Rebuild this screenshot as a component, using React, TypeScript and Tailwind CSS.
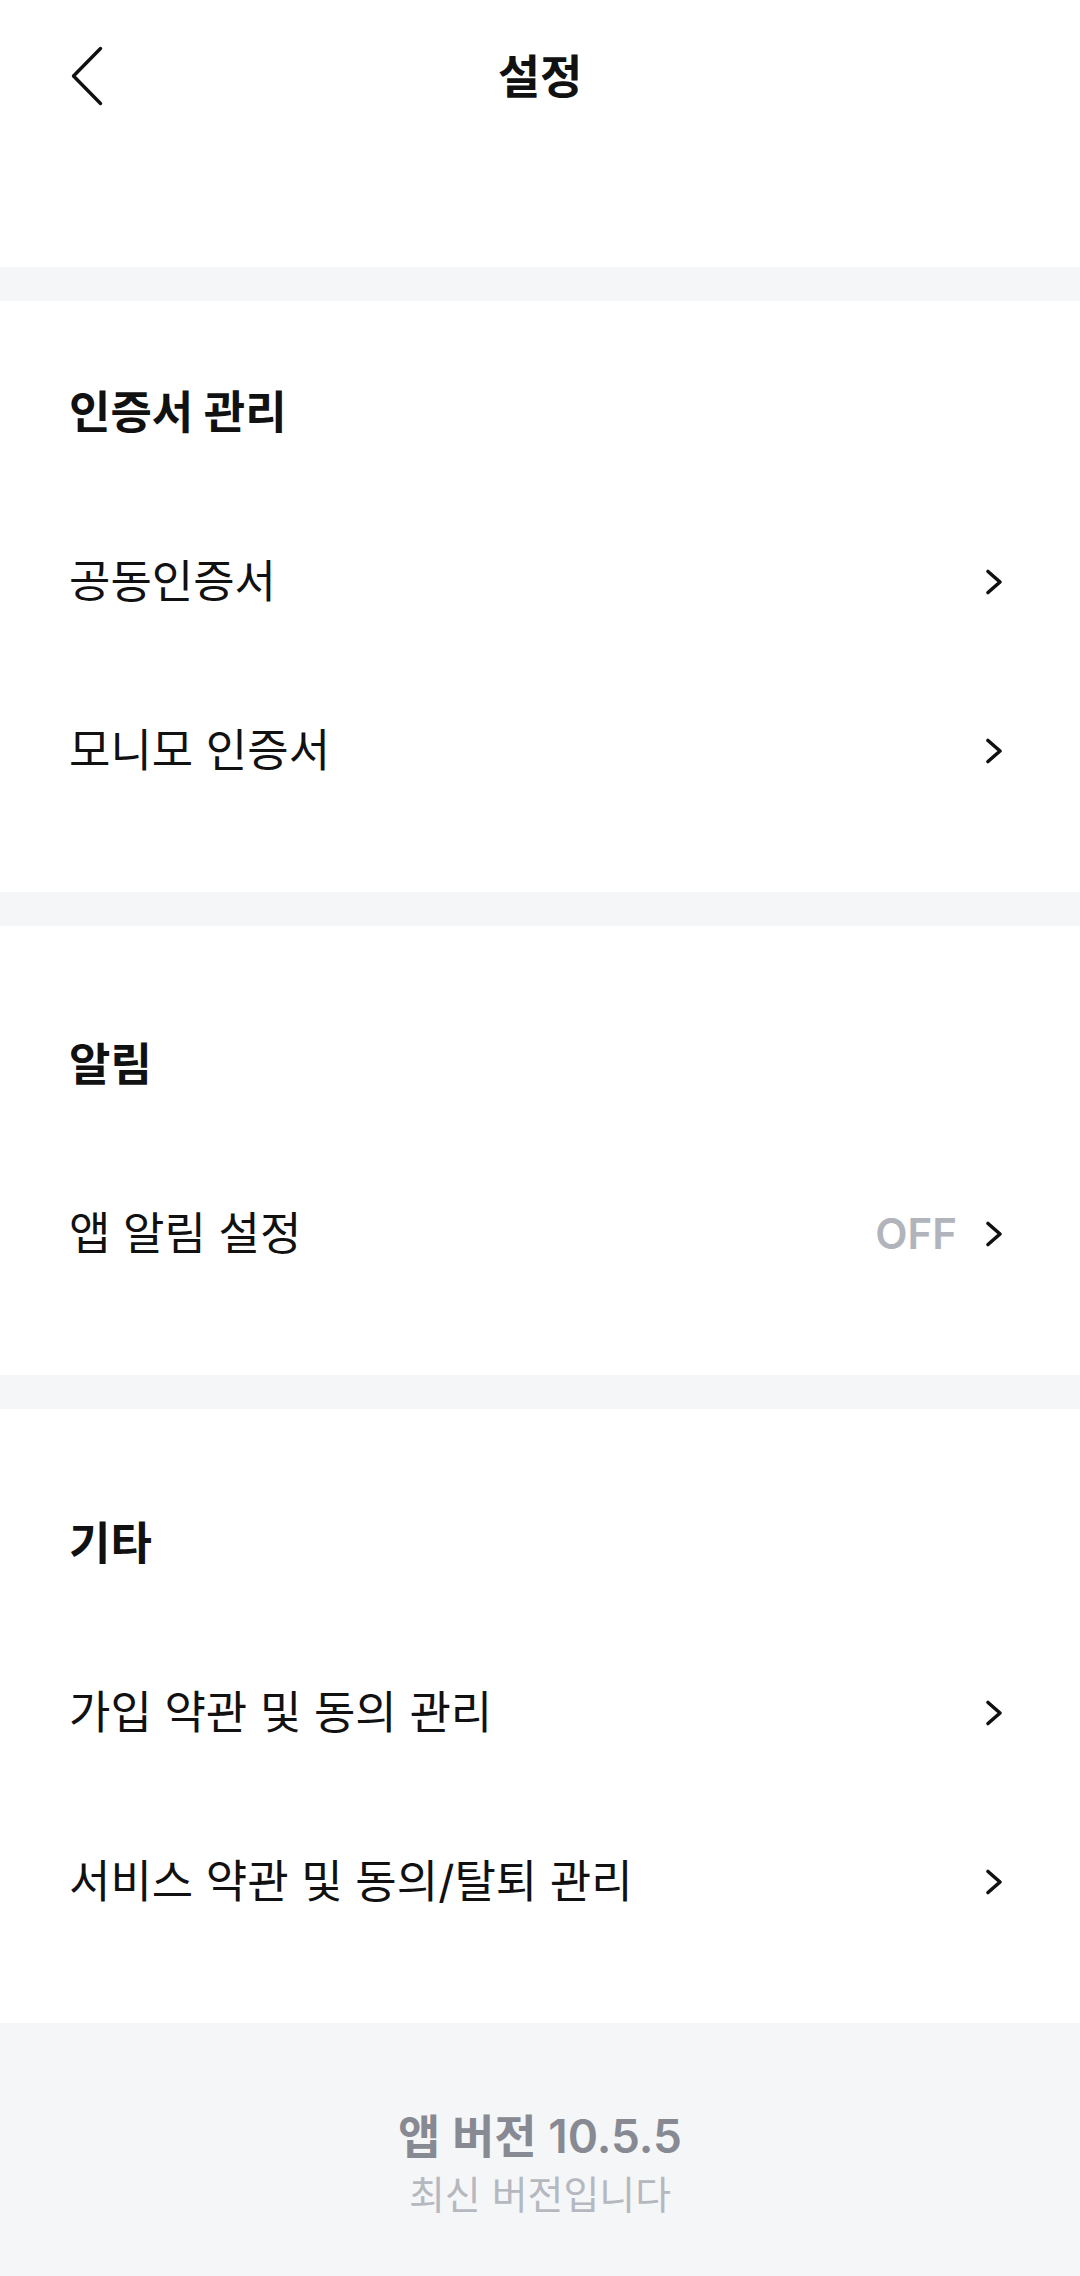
import React from "react";

type Item = {
  label: string;
  value?: string;
};

type Section = {
  title: string;
  padTop: string;
  items: Item[];
};

const SECTIONS: Section[] = [
  {
    title: "인증서 관리",
    padTop: "pt-[27px]",
    items: [{ label: "공동인증서" }, { label: "모니모 인증서" }]
  },
  {
    title: "알림",
    padTop: "pt-[54px]",
    items: [{ label: "앱 알림 설정", value: "OFF" }]
  },
  {
    title: "기타",
    padTop: "pt-[50px]",
    items: [{ label: "가입 약관 및 동의 관리" }, { label: "서비스 약관 및 동의/탈퇴 관리" }]
  }
];

function BackIcon() {
  return (
    <svg width="40" height="66" viewBox="0 0 40 66" fill="none">
      <path d="M32.5 5.5L5.5 33L32.5 60.5" stroke="#111111" strokeWidth="3.4" strokeLinecap="round" strokeLinejoin="round" />
    </svg>
  );
}

function ChevronRight() {
  return (
    <svg width="20" height="28" viewBox="0 0 20 28" fill="none" className="shrink-0">
      <path d="M4 3.5L16 14L4 24.5" stroke="#111111" strokeWidth="3.6" strokeLinecap="round" strokeLinejoin="round" />
    </svg>
  );
}

function Divider() {
  return <div className="h-[34px] bg-[#f5f6f8]" />;
}

function SettingRow({ item }: { item: Item }) {
  return (
    <button type="button" className="flex h-[169px] w-full items-center justify-between pl-[69px] pr-[76px] text-left">
      <span className="text-[45px] leading-none text-[#111111]">{item.label}</span>
      <span className="flex items-center gap-[27px]">
        {item.value ? <span className="text-[42px] font-semibold leading-none text-[#b1b4bb]">{item.value}</span> : null}
        <ChevronRight />
      </span>
    </button>
  );
}

export default function App() {
  return (
    <div className="flex min-h-[2276px] w-full flex-col bg-white font-['Inter','Noto_Sans_CJK_KR',sans-serif]">
      <header className="h-[267px]">
        <div className="grid h-[152px] grid-cols-[1fr_auto_1fr] items-center">
          <button type="button" className="ml-[68px] w-fit">
            <BackIcon />
          </button>
          <h1 className="text-[46px] font-bold leading-none text-[#111111]">설정</h1>
          <div />
        </div>
      </header>

      {SECTIONS.map((section) => (
        <React.Fragment key={section.title}>
          <Divider />
          <section className={`${section.padTop} pb-[57px]`}>
            <div className="flex h-[169px] items-center pl-[69px]">
              <h2 className="text-[45px] font-bold leading-none text-[#111111]">{section.title}</h2>
            </div>
            {section.items.map((item) => (
              <SettingRow key={item.label} item={item} />
            ))}
          </section>
        </React.Fragment>
      ))}

      <footer className="flex flex-1 flex-col items-center bg-[#f5f6f8] pt-[90px]">
        <p className="text-[46px] font-semibold leading-none text-[#878a92]">앱 버전 10.5.5</p>
        <p className="mt-[16px] text-[39px] leading-none text-[#b5b8bf]">최신 버전입니다</p>
      </footer>
    </div>
  );
}
